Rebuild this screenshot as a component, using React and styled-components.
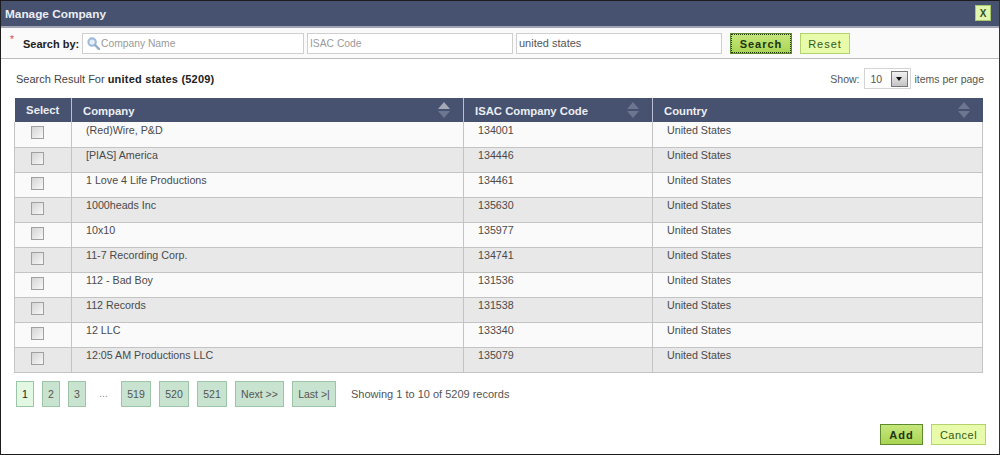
import React from 'react'
import styled, { createGlobalStyle } from 'styled-components'

const rows = [
  ['(Red)Wire, P&D', '134001'],
  ['[PIAS] America', '134446'],
  ['1 Love 4 Life Productions', '134461'],
  ['1000heads Inc', '135630'],
  ['10x10', '135977'],
  ['11-7 Recording Corp.', '134741'],
  ['112 - Bad Boy', '131536'],
  ['112 Records', '131538'],
  ['12 LLC', '133340'],
  ['12:05 AM Productions LLC', '135079']
]

const pages = ['2', '3']
const lastPages = ['519', '520', '521']

const App = () => (
  <>
    <GlobalStyle />
    <Dialog>
      <TitleBar>
        <Title>Manage Company</Title>
        <CloseButton>X</CloseButton>
      </TitleBar>

      <SearchBar>
        <Required>*</Required>
        <SearchLabel>Search by:</SearchLabel>
        <Field>
          <SearchIcon viewBox="0 0 14 14">
            <circle cx="5.5" cy="5.5" r="4" fill="#e6eef7" stroke="#9dbadd" strokeWidth="2.2" />
            <path d="M8.5 8.5 L13 13" stroke="#9aaec8" strokeWidth="2.6" strokeLinecap="round" />
          </SearchIcon>
          <Placeholder>Company Name</Placeholder>
        </Field>
        <Field $width={206} $gap={3}><Placeholder>ISAC Code</Placeholder></Field>
        <Field $width={206} $gap={3}>united states</Field>
        <SearchButton>Search</SearchButton>
        <ResetButton>Reset</ResetButton>
      </SearchBar>

      <Content>
        <ResultBar>
          <span>Search Result For <strong>united states (5209)</strong></span>
          <PerPage>
            Show:
            <PageSize>
              10
              <SelectArrow />
            </PageSize>
            items per page
          </PerPage>
        </ResultBar>

        <Table>
          <thead>
            <tr>
              <SelectHead>Select</SelectHead>
              <Head $width={392}>Company<SortArrows $dark /></Head>
              <Head $width={189}>ISAC Company Code<SortArrows /></Head>
              <Head>Country<SortArrows /></Head>
            </tr>
          </thead>
          <tbody>
            {rows.map(([company, code], i) => (
              <Row key={code} $odd={i % 2 === 1}>
                <CheckCell><Checkbox /></CheckCell>
                <Cell>{company}</Cell>
                <Cell>{code}</Cell>
                <Cell>United States</Cell>
              </Row>
            ))}
          </tbody>
        </Table>

        <Pager>
          <PageButton $width={18} $current>1</PageButton>
          {pages.map(p => <PageButton key={p} $width={18}>{p}</PageButton>)}
          <Dots>...</Dots>
          {lastPages.map(p => <PageButton key={p} $width={30}>{p}</PageButton>)}
          <PageButton $width={49}>Next &gt;&gt;</PageButton>
          <PageButton $width={44}>Last &gt;|</PageButton>
          <PagerInfo>Showing 1 to 10 of 5209 records</PagerInfo>
        </Pager>
      </Content>

      <Footer>
        <AddButton>Add</AddButton>
        <CancelButton>Cancel</CancelButton>
      </Footer>
    </Dialog>
  </>
)

const GlobalStyle = createGlobalStyle`
  html, body {
    margin: 0;
    padding: 0;
    background: #fff;
  }
  body {
    font-family: "Liberation Sans", Arial, sans-serif;
    font-size: 10px;
    color: #444;
  }
`

const Dialog = styled.div`
  box-sizing: border-box;
  width: 1000px;
  height: 455px;
  border: 1px solid #1c1c1c;
  border-right-color: #333;
  background: #fff;
  display: flex;
  flex-direction: column;
`

const TitleBar = styled.div`
  box-sizing: border-box;
  height: 27px;
  flex: none;
  background: #475270;
  border-bottom: 2px solid #a2a6b2;
  display: flex;
  align-items: center;
  justify-content: space-between;
  padding: 0 8px 0 4px;
`

const Title = styled.div`
  color: #eceef3;
  font-size: 11.8px;
  font-weight: bold;
`

const CloseButton = styled.div`
  box-sizing: border-box;
  width: 16px;
  height: 16px;
  margin-top: -1px;
  background: #dff5b0;
  border: 1px solid #a9c96a;
  color: #33501c;
  font-size: 10px;
  font-weight: bold;
  display: flex;
  align-items: center;
  justify-content: center;
`

const SearchBar = styled.div`
  box-sizing: border-box;
  height: 31px;
  flex: none;
  background: #fafafa;
  border-bottom: 1px solid #bdbdbd;
  display: flex;
  align-items: center;
  padding: 1px 0 0 9px;
`

const Required = styled.span`
  color: #d9433a;
  font-size: 10px;
  align-self: flex-start;
  margin-top: 5px;
  width: 13px;
`

const SearchLabel = styled.span`
  color: #222;
  font-size: 11px;
  font-weight: bold;
  width: 59px;
`

const Field = styled.div`
  box-sizing: border-box;
  width: ${({$width}) => $width || 222}px;
  height: 21px;
  margin-left: ${({$gap}) => $gap || 0}px;
  background: #fff;
  border: 1px solid #cfcfcf;
  display: flex;
  align-items: center;
  padding: 0 0 1px 2px;
  font-size: 11px;
  color: #555;
`

const Placeholder = styled.span`
  color: #9a9a9a;
  font-size: 10.3px;
`

const SearchIcon = styled.svg`
  width: 13px;
  height: 13px;
  margin: 0 1px 0 2px;
`

const BaseButton = styled.div`
  box-sizing: border-box;
  height: 21px;
  display: flex;
  align-items: center;
  justify-content: center;
  font-size: 11px;
  letter-spacing: 1px;
`

const SearchButton = styled(BaseButton)`
  width: 62px;
  margin-left: 8px;
  background: linear-gradient(#c6e77c, #a9d453);
  border: 1px solid #5f8a2e;
  outline: 1px dotted #24360f;
  outline-offset: -2px;
  color: #20330f;
  font-weight: bold;
`

const ResetButton = styled(BaseButton)`
  width: 50px;
  margin-left: 8px;
  background: #e7fbaa;
  border: 1px solid #b5d36d;
  color: #355a18;
`

const Content = styled.div`
  flex: 1;
  padding: 0 15px 0 13px;
  display: flex;
  flex-direction: column;
`

const ResultBar = styled.div`
  height: 39px;
  display: flex;
  align-items: center;
  justify-content: space-between;
  font-size: 11px;
  color: #444;
  padding-left: 2px;
  strong {
    color: #222;
    letter-spacing: 0.2px;
  }
`

const PerPage = styled.div`
  display: flex;
  align-items: center;
  gap: 4px;
  font-size: 10.5px;
  color: #555;
`

const PageSize = styled.div`
  box-sizing: border-box;
  width: 47px;
  height: 21px;
  border: 1px solid #d4d4d4;
  display: flex;
  align-items: center;
  justify-content: space-between;
  padding: 0 2px 0 6px;
`

const SelectArrow = styled.span`
  box-sizing: border-box;
  width: 17px;
  height: 16px;
  background: linear-gradient(#f2f2f2, #c4c4c4);
  border: 1px solid #777;
  position: relative;
  &::after {
    content: '';
    position: absolute;
    left: 4px;
    top: 5px;
    border-left: 3.5px solid transparent;
    border-right: 3.5px solid transparent;
    border-top: 4px solid #111;
  }
`

const Table = styled.table`
  width: 969px;
  border-collapse: collapse;
  table-layout: fixed;
`

const Head = styled.th`
  box-sizing: border-box;
  position: relative;
  width: ${({$width}) => $width ? `${$width}px` : 'auto'};
  height: 24px;
  padding: 1px 0 0 11px;
  background: #475270;
  border-left: 1px solid #b9bfd0;
  color: #eceef3;
  font-size: 11.3px;
  font-weight: bold;
  text-align: left;
`

const SelectHead = styled(Head)`
  width: 57px;
  padding: 0;
  border-left: none;
  text-align: center;
`

const SortArrows = styled.span`
  position: absolute;
  right: 13px;
  top: 4px;
  width: 12px;
  height: 16px;
  &::before, &::after {
    content: '';
    position: absolute;
    left: 0;
    border-left: 6px solid transparent;
    border-right: 6px solid transparent;
  }
  &::before {
    top: 0;
    border-bottom: 7px solid ${({$dark}) => $dark ? '#a5a9b5' : '#6d7690'};
  }
  &::after {
    bottom: 0;
    border-top: 7px solid #6d7690;
  }
`

const Row = styled.tr`
  background: ${({$odd}) => $odd ? '#e8e8e8' : '#fafafa'};
`

const Cell = styled.td`
  box-sizing: border-box;
  height: 25px;
  padding: 0 0 9px 14px;
  border: 1px solid #c4c4c4;
  border-width: 0 0 1px 1px;
  font-size: 10.7px;
  color: #4a4a4a;
  vertical-align: middle;
  &:last-child {
    border-right: 1px solid #c4c4c4;
  }
`

const CheckCell = styled(Cell)`
  padding: 4px 0 0 16px;
  vertical-align: top;
`

const Checkbox = styled.span`
  display: block;
  box-sizing: border-box;
  width: 13px;
  height: 13px;
  border: 1px solid #a0a0a0;
  background: linear-gradient(135deg, #d4d4d4, #f8f8f8);
`

const Pager = styled.div`
  display: flex;
  align-items: center;
  margin-top: 8px;
  height: 26px;
  padding-left: 2px;
`

const PageButton = styled.div`
  box-sizing: border-box;
  height: 26px;
  width: ${({$width}) => $width}px;
  margin-right: 8px;
  display: flex;
  align-items: center;
  justify-content: center;
  background: ${({$current}) => $current ? '#e3f8e3' : '#c8e3cf'};
  border: 1px solid #9cc4a6;
  color: ${({$current}) => $current ? '#222' : '#555'};
  font-size: 10.5px;
`

const Dots = styled.span`
  width: 19px;
  margin-right: 8px;
  text-align: center;
  color: #888;
`

const PagerInfo = styled.span`
  margin-left: 7px;
  font-size: 11px;
  color: #555;
`

const Footer = styled.div`
  display: flex;
  justify-content: flex-end;
  gap: 8px;
  padding: 0 13px 9px 0;
`

const AddButton = styled(BaseButton)`
  width: 43px;
  background: linear-gradient(#c6e77c, #a9d453);
  border: 1px solid #5f8a2e;
  color: #20330f;
  font-weight: bold;
`

const CancelButton = styled(BaseButton)`
  width: 55px;
  background: #e7fbaa;
  border: 1px solid #b5d36d;
  color: #355a18;
  letter-spacing: 0.5px;
`

export default App
